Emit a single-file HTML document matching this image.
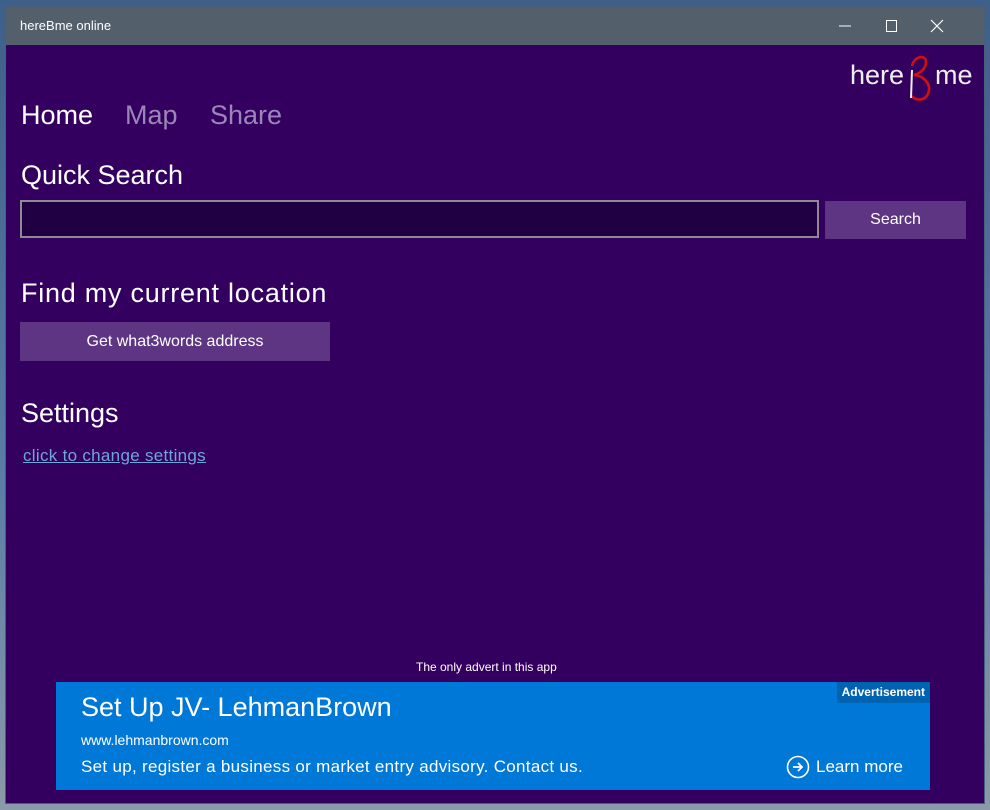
<!DOCTYPE html>
<html><head><meta charset="utf-8">
<style>
*{margin:0;padding:0;box-sizing:border-box}
html,body{width:990px;height:810px;overflow:hidden;background:linear-gradient(180deg,#3d5f8a,#5a7ea6 60%,#8a9aa8);font-family:"Liberation Sans",sans-serif}
.win{position:absolute;left:6px;top:7px;width:978px;height:796px;background:#330060;outline:1px solid #4a5e78}
.title{position:absolute;left:0;top:0;width:100%;height:38px;background:#535f6b;color:#fff;font-size:13px}
.title span.t{position:absolute;left:14px;top:11px}
.ctl{position:absolute;top:0;height:38px;width:46px;color:#fff}
.abs{position:absolute;color:#fff;white-space:nowrap}
.nav{font-size:27px;top:93px}
.h{font-size:27px}
.btn{position:absolute;background:#5e3582;color:#fff;font-size:16px;text-align:center}
</style></head><body>
<div class="win">
 <div class="title"><span class="t">hereBme online</span>
  <svg class="ctl" style="left:816px" viewBox="0 0 46 38"><line x1="17" y1="19" x2="29" y2="19" stroke="#fff" stroke-width="1"/></svg>
  <svg class="ctl" style="left:862px" viewBox="0 0 46 38"><rect x="18.5" y="13.5" width="10" height="11" fill="none" stroke="#fff" stroke-width="1"/></svg>
  <svg class="ctl" style="left:908px" viewBox="0 0 46 38"><path d="M17 13L29 25M29 13L17 25" stroke="#fff" stroke-width="1.2"/></svg>
 </div>
 <div class="abs" style="left:844px;top:53px;font-size:27px;color:#eee">here</div>
 <svg style="position:absolute;left:894px;top:47px" width="40" height="48" viewBox="0 0 40 48">
  <path d="M12 12 C14 2 26 0 26 8 C26 16 18 20 14 21 C24 22 32 30 28 40 C24 48 14 46 12 42" fill="none" stroke="#d01010" stroke-width="2.6"/>
  <line x1="12" y1="16" x2="11" y2="44" stroke="#eee" stroke-width="2"/>
 </svg>
 <div class="abs" style="left:929px;top:53px;font-size:27px;color:#eee">me</div>
 <div class="abs nav" style="left:15px">Home</div>
 <div class="abs nav" style="left:119px;color:#9b86b8">Map</div>
 <div class="abs nav" style="left:204px;color:#9b86b8">Share</div>
 <div class="abs h" style="left:15px;top:153px">Quick Search</div>
 <div style="position:absolute;left:14px;top:193px;width:799px;height:38px;background:#200042;border:2px solid #8e8a92"></div>
 <div class="btn" style="left:819px;top:194px;width:141px;height:38px;line-height:38px">Search</div>
 <div class="abs h" style="left:15px;top:271px;letter-spacing:0.75px">Find my current location</div>
 <div class="btn" style="left:14px;top:315px;width:310px;height:39px;line-height:39px">Get what3words address</div>
 <div class="abs h" style="left:15px;top:391px">Settings</div>
 <div class="abs" style="left:17px;top:439px;font-size:17px;color:#6fa6d8;text-decoration:underline;letter-spacing:0.3px">click to change settings</div>
 <div class="abs" style="left:410px;top:653px;font-size:12px">The only advert in this app</div>
 <div style="position:absolute;left:50px;top:675px;width:874px;height:108px;background:#0078d7">
  <div style="position:absolute;right:0;top:0;background:#0063b1;color:#fff;font-size:12px;font-weight:bold;padding:3px 5px 4px">Advertisement</div>
  <div class="abs" style="left:25px;top:10px;font-size:27px">Set Up JV- LehmanBrown</div>
  <div class="abs" style="left:25px;top:50px;font-size:14px">www.lehmanbrown.com</div>
  <div class="abs" style="left:25px;top:75px;font-size:17px;letter-spacing:0.3px">Set up, register a business or market entry advisory. Contact us.</div>
  <svg style="position:absolute;left:730px;top:73px" width="24" height="24" viewBox="0 0 24 24"><circle cx="12" cy="12" r="10.5" fill="none" stroke="#fff" stroke-width="1.6"/><path d="M7 12H16M12 8L16 12L12 16" fill="none" stroke="#fff" stroke-width="1.8"/></svg>
  <div class="abs" style="left:760px;top:75px;font-size:17px">Learn more</div>
 </div>
</div>
</body></html>
